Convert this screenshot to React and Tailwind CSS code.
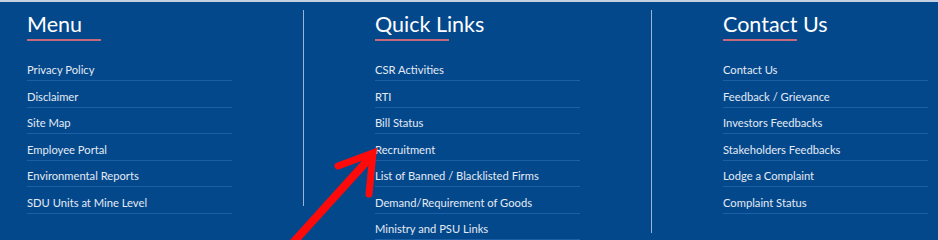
const columns = [
  {
    title: 'Menu',
    links: ['Privacy Policy', 'Disclaimer', 'Site Map', 'Employee Portal', 'Environmental Reports', 'SDU Units at Mine Level'],
    divider: true,
  },
  {
    title: 'Quick Links',
    links: [
      'CSR Activities',
      'RTI',
      'Bill Status',
      'Recruitment',
      'List of Banned / Blacklisted Firms',
      'Demand/Requirement of Goods',
      'Ministry and PSU Links',
    ],
    divider: true,
  },
  {
    title: 'Contact Us',
    links: ['Contact Us', 'Feedback / Grievance', 'Investors Feedbacks', 'Stakeholders Feedbacks', 'Lodge a Complaint', 'Complaint Status'],
    divider: false,
  },
]

function FooterColumn({ title, links, divider }) {
  return (
    <div className="flex w-[348px] shrink-0">
      <div className="w-[205px] shrink-0">
        <h3 className="text-[21.5px] leading-[28px] font-normal text-white">{title}</h3>
        <div className="mt-[1px] h-[2px] w-[74px] bg-[#c46a7c]" />
        <ul className="mt-[13.5px]">
          {links.map((link) => (
            <li key={link} className="border-b border-[#1d5fa5] pt-[6.5px] pb-[2px] text-[11.2px] leading-[17px] text-[#e3eaf3]">
              <a href="#">{link}</a>
            </li>
          ))}
        </ul>
      </div>
      {divider && <div className="ml-[71px] mb-[7.5px] w-px bg-[#9cb3d5]" />}
    </div>
  )
}

export default function App() {
  return (
    <div className="relative h-[240px] w-full overflow-hidden bg-[#04488c] font-['Lato','Noto_Sans',sans-serif]">
      <div className="h-[2px] bg-[#c3d1e3]" />
      <div className="flex items-start pt-[8px] pl-[27px]">
        {columns.map((col) => (
          <FooterColumn key={col.title} {...col} />
        ))}
      </div>
      <svg className="pointer-events-none absolute inset-0" width="938" height="240" viewBox="0 0 938 240">
        <path d="M290 246 L368 160" stroke="#ff0a0a" strokeWidth="8" strokeLinecap="round" fill="none" />
        <path d="M338 166 L373 153 L369 194" stroke="#ff0a0a" strokeWidth="7" strokeLinecap="round" strokeLinejoin="miter" fill="none" />
      </svg>
    </div>
  )
}
